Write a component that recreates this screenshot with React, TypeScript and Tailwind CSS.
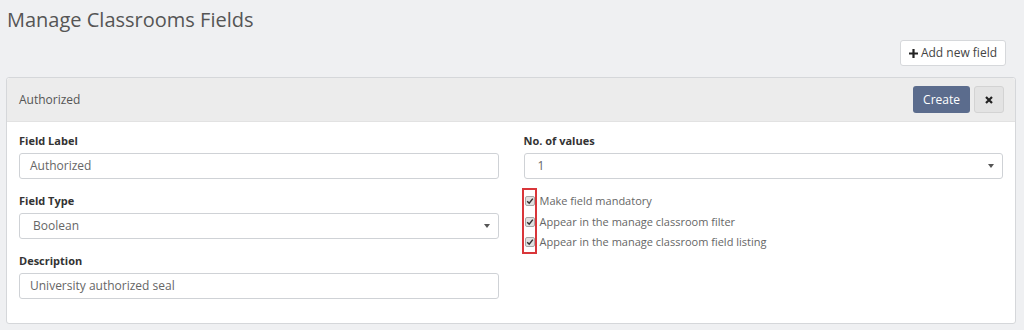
import React from 'react';

const font = { fontFamily: '"Open Sans", "Liberation Sans", sans-serif' };

const Caret = () => (
  <svg width="6" height="4" viewBox="0 0 6 4" className="shrink-0">
    <path d="M0 0 L6 0 L3 4 Z" fill="#555" />
  </svg>
);

// Small checked box, as the browser draws it
const CheckedBox = () => (
  <span className="flex h-[10px] w-[10px] items-center justify-center rounded-[2px] border border-[#a8a8a8] bg-[#e0e0e0]">
    <svg width="8" height="8" viewBox="0 0 8 8">
      <path d="M1.2 4.2 L3.2 6.2 L6.8 1.6" fill="none" stroke="#333" strokeWidth="1.5" />
    </svg>
  </span>
);

const Label = ({ children }: { children: React.ReactNode }) => (
  <div className="text-[11px] leading-4 font-bold text-[#333]">{children}</div>
);

const TextInput = ({ value }: { value: string }) => (
  <div className="mt-1 flex h-[26px] items-center rounded-[3px] border border-[#cfd2d6] bg-white px-[10px] text-[12px] text-[#666]">
    {value}
  </div>
);

const Select = ({ value }: { value: string }) => (
  <div className="mt-1 flex h-[26px] items-center justify-between rounded-[3px] border border-[#cfd2d6] bg-white pl-[13px] pr-[8px] text-[12px] text-[#666]">
    <span>{value}</span>
    <Caret />
  </div>
);

const options = [
  'Make field mandatory',
  'Appear in the manage classroom filter',
  'Appear in the manage classroom field listing',
];

export default function App() {
  return (
    <div className="min-h-[330px] bg-[#eff0f2] pl-[6px] pr-[8px] pt-[6px]" style={font}>
      <h1 className="pl-[1px] text-[20px] leading-[28px] font-normal text-[#555]">Manage Classrooms Fields</h1>

      <div className="mt-[6px] flex justify-end pr-[10px]">
        <button className="flex h-[26px] items-center gap-[3px] rounded-[3px] border border-[#d6d8db] bg-white px-[8px] text-[12px] text-[#444]">
          <svg width="9" height="9" viewBox="0 0 9 9">
            <path d="M4.5 0 V9 M0 4.5 H9" stroke="#222" strokeWidth="2.2" />
          </svg>
          Add new field
        </button>
      </div>

      <div className="mt-[11px] rounded-[3px] border border-[#d5d7da] bg-white">
        <div className="flex h-[44px] items-center justify-between rounded-t-[3px] border-b border-[#e2e2e2] bg-[#ececec] pl-[12px] pr-[11px]">
          <span className="text-[12px] text-[#555]">Authorized</span>
          <div className="flex items-center gap-[4px]">
            <button className="h-[27px] rounded-[3px] bg-[#5b6c8d] px-[10px] text-[12px] text-white">Create</button>
            <button className="flex h-[27px] w-[30px] items-center justify-center rounded-[3px] border border-[#d3d3d3] bg-[#e3e3e3]">
              <svg width="8" height="8" viewBox="0 0 8 8">
                <path d="M1 1 L7 7 M7 1 L1 7" stroke="#222" strokeWidth="2.2" />
              </svg>
            </button>
          </div>
        </div>

        <div className="grid grid-cols-2 gap-x-[25px] px-[12px] pt-[11px] pb-[24px]">
          <div className="flex flex-col gap-[14px]">
            <div>
              <Label>Field Label</Label>
              <TextInput value="Authorized" />
            </div>
            <div>
              <Label>Field Type</Label>
              <Select value="Boolean" />
            </div>
            <div>
              <Label>Description</Label>
              <TextInput value="University authorized seal" />
            </div>
          </div>

          <div>
            <Label>No. of values</Label>
            <Select value="1" />
            <div className="relative mt-[12px]">
              {options.map((o) => (
                <div key={o} className="flex h-[20.5px] items-center gap-[5px] pl-[1px] text-[11px] text-[#666]">
                  <CheckedBox />
                  <span>{o}</span>
                </div>
              ))}
              <div className="pointer-events-none absolute left-[-2px] top-[-3px] h-[66px] w-[15px] border-2 border-[#d9363a]" />
            </div>
          </div>
        </div>
      </div>
    </div>
  );
}
